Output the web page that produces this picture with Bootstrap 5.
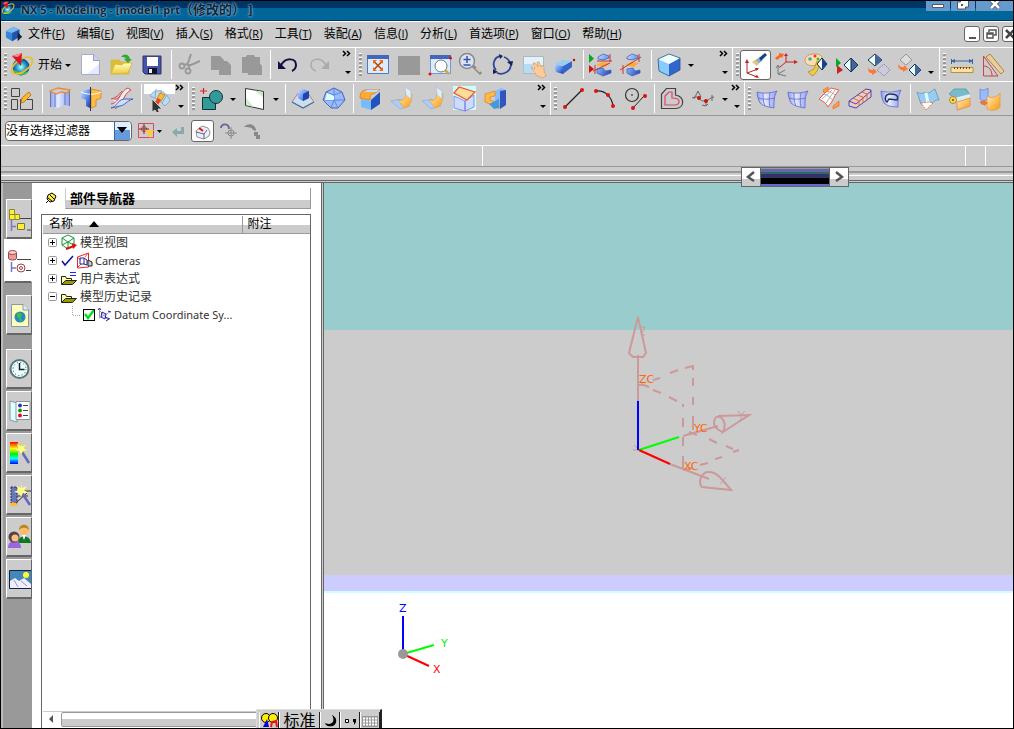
<!DOCTYPE html>
<html lang="zh-CN">
<head>
<meta charset="utf-8">
<meta name="viewport" content="width=device-width, initial-scale=1">
<title>NX 5 - Modeling</title>
<link href="https://cdn.jsdelivr.net/npm/bootstrap@5.3.0/dist/css/bootstrap.min.css" rel="stylesheet">
<style>
html,body{height:100%}
body{font-family:"Open Sans","Noto Sans CJK SC",sans-serif;font-size:12px;line-height:16px;color:#000;background:#ccc}
button{font:inherit;color:inherit;background:none;border:0;padding:0}
svg{display:block;flex:none}
.app{height:100vh;border:1px solid #000;overflow:hidden}
.titlebar{height:20px;background:linear-gradient(#036 7px,#069 7px,#069 19px,#036 19px);color:#123;font-weight:700;text-shadow:0 0 1px #8bd,0 0 2px #6ac,0 0 3px #6ac}
.titlebar .caption{white-space:pre;line-height:16px;font-size:11px}
.titlebar .caption span{font-size:13px}
.winbtns{height:10px;gap:1px}
.winbtns button{background:#69c;width:24px;height:10px;overflow:hidden}
.winbtns button:last-child{width:37px;padding-left:12px}
.winbtns svg{margin:0 auto}
.menubar{height:26px;border-top:1px solid #fff;padding:0 0 2px 4px;white-space:nowrap}
.menubar a{color:#000;text-decoration:none;display:block}
.menubar u{font-size:11px}
.menubar ul{gap:12px;margin-left:5px}
.mdi{gap:3px;margin-right:-5px}
.mdi button{width:16px;height:16px;border:1px solid #666;border-radius:3px;background:#fff}
.toolrow{height:34px;border-top:1px solid #fff;overflow:hidden}
.tgroup{border-left:1px solid #fff;height:33px}
.tgroup:first-child{border-left:0}
.grip{width:7px;height:24px;background:linear-gradient(#fff 1px,#999 1px 3px,transparent 3px) 3px 0/3px 4px repeat-y}
.tool{width:31px;height:30px;padding:2px}
.tool.start{width:67px;display:flex;align-items:center;gap:1px;white-space:nowrap}
.tool.on{background:#fff;border:1px solid #666;border-radius:3px;padding:1px}
.tool.small-on{width:23px;height:22px}
.tool.hot{background:linear-gradient(#fff 10px,transparent 10px)}
.vsep{width:1px;height:29px;background:#fff;margin:0 2px 0 3px}
.drop{width:12px;height:30px}
.over{width:13px;height:33px}
.gap-a{margin-left:7px}.gap-b{margin-left:22px}.gap-c{margin-left:26px}
.selbar{height:30px;border-top:1px solid #999;gap:2px;padding-left:4px}
.filter{position:relative;width:127px}
.filter select{width:100%;height:20px;border:1px solid #666;border-radius:4px;background:#fff;appearance:none;font:inherit;padding:0 18px 0 0;line-height:18px}
.filter svg{position:absolute;right:2px;top:1px;pointer-events:none}
.statusbar{height:21px;border-top:1px solid #fff}
.statusbar div+div{border-left:1px solid #fff}
.st-main{flex:0 0 47.5%}.st-a{width:20px}.st-b{width:28px}
.divider{height:17px;position:relative;background:linear-gradient(#999 1px,#ccc 1px 5px,#999 5px 7px,#ccc 7px 9px,#fff 9px 10px,#ccc 10px 14px,#666 14px 15px,#ccc 15px 16px,#666 16px)}
.floatbar{position:absolute;left:73.1%;top:1px;width:108px;height:20px;border:1px solid #666;z-index:3;background:#fff}
.floatbar button{width:18px;height:18px;background:linear-gradient(#fff 60%,#ccc 60%)}
.floatbar .track{background:linear-gradient(#999 1px,#66a 1px 4px,#366 4px 6px,#336 6px 10px,#000 10px 16px,#66c 16px);border:1px solid #666;border-width:0 1px}
.rail{width:31px;background:#999;border-left:2px solid #bbb;padding:16px 0 0 3px}
.rail button{display:block;width:26px;height:40px;background:#ccc;border:1px solid #fff;border-right-color:#666;border-bottom:2px solid #666;margin-bottom:2px;padding-bottom:3px;overflow:hidden}
.rail .first{margin-bottom:0}
.rail .active{background:#fff;height:44px;width:28px;margin:0 0 12px -2px;border-color:#fff;border-bottom-color:#666}
.rail .apart{margin-bottom:14px}
.navpane{width:289px;background:#fff}
.panehead{height:31px;padding:4px 10px 5px 13px;gap:8px}
.panehead h1{font-size:13px;font-weight:700;line-height:20px;background:linear-gradient(#fff 12px,#ccc 12px);border:solid #999;border-width:0 1px 1px 0;border-left:1px solid #ccc;padding-left:4px;margin:0}
.treebox{margin:0 10px 0 9px;border:1px solid #666;border-bottom:0;padding:1px 0 0 1px}
.treebox table{width:100%;border-collapse:collapse;table-layout:fixed}
.treebox th{font-weight:400;height:17px;line-height:16px;padding:0 0 0 6px;background:linear-gradient(#fff 9px,#ccc 9px);border-bottom:1px solid #999}
.treebox th+th{border-left:1px solid #999;width:68px;padding-left:5px}
.treebox td{padding:0 0 0 4px;height:18px;line-height:18px;color:#333;white-space:nowrap}
.treebox td .node{gap:2px;height:18px}
.treebox .lat{font-family:"Noto Sans","Noto Sans CJK SC",sans-serif;font-size:11px}
.node input{appearance:none;width:12px;height:12px;border:1px solid #000;margin:0;background:#fff url("data:image/svg+xml,%3Csvg xmlns='http://www.w3.org/2000/svg' viewBox='0 0 10 10'%3E%3Cpath d='M1 4l3 4 6-8' fill='none' stroke='%2300e020' stroke-width='2.4'/%3E%3C/svg%3E")}
.leaf{padding-left:24px}
.hscroll{height:17px;border-top:1px solid #ccc}
.hscroll .thumb{height:15px;border:1px solid #999;border-radius:2px;background:linear-gradient(#fff 6px,#ccc 6px)}
.hscroll button{width:18px;height:15px}
.split{width:3px;background:#ccc;border:solid #666;border-width:0 1px}
.scene{position:relative;background:#fff}
.scene svg{position:absolute;left:0;top:0;width:100%;height:100%;font-family:"DejaVu Sans",sans-serif;font-size:11px}
.sky{flex:147 0 0;background:#9cc}.ground{flex:245 0 0;background:#ccc}.haze{flex:16 0 0;background:#ccf}.rim{flex:2 0 0;background:#cff}.floor{flex:135 0 0}
.ime{position:absolute;left:255px;bottom:0;height:19px;background:#ccc;border:1px solid #ddd;border-right:2px solid #222;border-bottom:0;padding:2px 0 0 2px;z-index:4}
.ime button{height:16px;border-right:1px solid #222;border-left:1px solid #fff;width:20px}
.ime .std{width:41px;font-size:16px;line-height:16px}
</style>
</head>
<body>
<svg width="0" height="0" class="position-absolute" aria-hidden="true">
<defs>
<linearGradient id="gb" x2="1" y2="1"><stop stop-color="#cdf"/><stop offset=".5" stop-color="#69e"/><stop offset="1" stop-color="#23a"/></linearGradient>
<linearGradient id="go" x2="1" y2="1"><stop stop-color="#fec"/><stop offset="1" stop-color="#f90"/></linearGradient>
<linearGradient id="gp"><stop stop-color="#8a9cf4"/><stop offset=".4" stop-color="#e6ecff"/><stop offset="1" stop-color="#8a9cf4"/></linearGradient>
<linearGradient id="gy" y2="1" x2="0"><stop stop-color="#ffc"/><stop offset="1" stop-color="#ec3"/></linearGradient>
<radialGradient id="gs"><stop stop-color="#bff"/><stop offset=".5" stop-color="#3ac"/><stop offset="1" stop-color="#048"/></radialGradient>
<linearGradient id="rain" x2="0" y2="1"><stop stop-color="#f00"/><stop offset=".3" stop-color="#ff0"/><stop offset=".55" stop-color="#0e0"/><stop offset=".75" stop-color="#0ff"/><stop offset="1" stop-color="#00f"/></linearGradient>
</defs>
<symbol id="nx" viewBox="0 0 27 26"><circle cx="11" cy="15" r="8.500" fill="url(#gs)"/><path d="M3 17a9 9 0 0 0 16 2c-6 3-11 2-16-2z" fill="#4c4"/><ellipse cx="12" cy="13.500" rx="12" ry="6" transform="rotate(-35 12 13.500)" fill="none" stroke="#eb3" stroke-width="1.800"/><path d="M2 4l10-3-1 13z" fill="#d12"/><path d="M2 4l6 1 4-4z" fill="#f88"/></symbol>
<symbol id="cube3" viewBox="0 0 20 20"><path d="M1 7l8-5 7 3v8l-8 5-7-4z" fill="#38d"/><path d="M1 7l8-5 7 3-8 4z" fill="#7be"/><path d="M8 9l8-4v8l-8 5z" fill="#25a"/><path d="M14 8l5 5-5 5z" fill="#124"/></symbol>
<symbol id="tri" viewBox="0 0 12 26"><path d="M3 12h6l-3 3z"/></symbol>
<symbol id="more" viewBox="0 0 13 33"><path d="M1 3l2.500 2.500L1 8M5 3l2.500 2.500L5 8" fill="none" stroke="#000" stroke-width="1.500"/><path d="M3 23h6l-3 3z"/></symbol>
<symbol id="new" viewBox="0 0 27 26"><path d="M4.500 2.500h12l6 6v14h-18z" fill="#fff" stroke="#aac"/><path d="M16.500 2.500v6h6" fill="#ccf" stroke="#99c"/><path d="M10 22l12-10v10z" fill="#e4ebff"/></symbol>
<symbol id="open" viewBox="0 0 27 26"><path d="M3 8h8l2 2h8v12H3z" fill="#db3" stroke="#cb5"/><path d="M3 22l4-10 7 1 2-2h8l-4 10z" fill="url(#gy)" stroke="#db4"/><path d="M13 5c3-4 8-3 9 2h2l-4 4-4-4h2c-1-2-3-2-5-2z" fill="#3a3"/></symbol>
<symbol id="save" viewBox="0 0 27 26"><path d="M4 4h18v18H6l-2-2z" fill="#45a" stroke="#336"/><path d="M8 5h11v9H8z" fill="#fff"/><path d="M9 16h9v6H9z" fill="#112"/><path d="M10 17h3v4h-3z" fill="#eee"/></symbol>
<symbol id="cut" viewBox="0 0 27 26" fill="none"><path d="M15 2l-3 9-4 3M24 9l-9 4-4 0M13 14l0 3" stroke="#999" stroke-width="2"/><circle cx="6" cy="14" r="2.500" stroke="#999" stroke-width="1.800"/><circle cx="12" cy="19" r="2.500" stroke="#999" stroke-width="1.800"/></symbol>
<symbol id="copy" viewBox="0 0 27 26" fill="#999"><path d="M4 4h9l4 4v10H4z"/><path d="M12 9h8l4 4v10H12z"/></symbol>
<symbol id="paste" viewBox="0 0 27 26" fill="#999"><path d="M4 5h4l1-2h7l1 2h5v16H4z"/><path d="M10 10h11l3 4v9H10z"/></symbol>
<symbol id="undo" viewBox="0 0 27 26"><path d="M6 13C11 5 21 6 21 13c0 3-2 5-4 6" fill="none" stroke="#114" stroke-width="2"/><path d="M3 9v8h8z" fill="#114"/></symbol>
<symbol id="redo" viewBox="0 0 27 26"><path d="M20 13C15 5 5 6 5 13c0 3 2 5 5 6" fill="none" stroke="#aaa" stroke-width="1.500"/><path d="M23 9v8h-8z" fill="#aaa"/></symbol>
<symbol id="fit" viewBox="0 0 27 26"><path d="M2.500 3.500h21v18h-21z" fill="#dcecff" stroke="#57c"/><path d="M2 3h22v4H2z" fill="#46b"/><path d="M9 9.500l8 8M17 9.500l-8 8" stroke="#b40" stroke-width="1.500"/><path d="M8 8h4l-4 4zM18 8h-4l4 4zM8 19h4l-4-4zM18 19h-4l4-4z" fill="#f60"/></symbol>
<symbol id="blank" viewBox="0 0 27 26"><path d="M2 4h22v19H2z" fill="#999"/><path d="M13 20h2v1h-2zM20 20h2v1h-2z" fill="#a94"/></symbol>
<symbol id="zoomw" viewBox="0 0 27 26"><path d="M3.500 4.500h20v17h-20z" fill="#dcecff" stroke="#79c"/><path d="M3 3h21v4H3z" fill="#46b"/><circle cx="14" cy="14" r="6" fill="#fff" stroke="#777"/><path d="M18 18l4 4" stroke="#ca4" stroke-width="2.500"/><circle cx="23.500" cy="6" r="1.500" fill="#d11"/><circle cx="3" cy="22" r="1.500" fill="#d11"/></symbol>
<symbol id="zoomp" viewBox="0 0 27 26"><circle cx="9" cy="9" r="7.500" fill="#dde2ee" stroke="#888" stroke-width="1.500"/><path d="M9 4v7M5.500 7.500h7M5.500 13h7" stroke="#35b" stroke-width="1.500"/><path d="M15 14l8 8" stroke="#888" stroke-width="3"/><path d="M18 16l4 4" stroke="#eca" stroke-width="1.500"/></symbol>
<symbol id="rot" viewBox="0 0 27 26" fill="none"><path d="M12 4C4 5 3 14 7 18M8 21c8 3 14-3 14-9M15 5c3 1 5 3 6 6" stroke="#349" stroke-width="1.800"/><path d="M4 17l0 5 5-2zM18 10l6-1-1 5zM10 2l4 2-3 3z" fill="#125"/></symbol>
<symbol id="pan" viewBox="0 0 27 26"><path d="M3.500 4.500h20v17h-20z" fill="#e4f2ff" stroke="#abb"/><path d="M3 21V12h10v9z" fill="#9ce" opacity=".6"/><path d="M11 15l4 2-2-6 2 0 3 4-1-5 2 0 2 5 1-2 2 2v4l2 5-4 2-6-3z" fill="#fc9" stroke="#c96" stroke-width=".7"/></symbol>
<symbol id="persp" viewBox="0 0 27 26"><path d="M3 12l9 2v8L5 20z" fill="url(#gb)"/><path d="M12 14l9-5v6l-9 7z" fill="#36c"/><path d="M3 12l9-4 9 1-9 5z" fill="#9ce"/><circle cx="23" cy="8" r="1.200" fill="#c00"/></symbol>
<symbol id="sec1" viewBox="0 0 27 26"><path d="M1 2l5 4.500-5 4.500z" fill="#0a2"/><path d="M1 13l5 4-5 4z" fill="#c11"/><path d="M10 5l5-3 6 2v2l-6 2-5-1zM9 17l6-1 2 3 6-1v3l-8 3-6-3z" fill="url(#gb)" stroke="#46b" stroke-width=".8"/><path d="M8 13l6-3 8 1-5 4z" fill="#fa3"/><path d="M5 19L22 11M9 9h15M22 2v8M7 13v9" stroke="#c33"/></symbol>
<symbol id="sec2" viewBox="0 0 27 26"><path d="M8 5l5-3 6 2v2l-6 2-5-1zM8 17l6-1 2 3 5-1v3l-8 3-5-3z" fill="url(#gb)" stroke="#46b" stroke-width=".8"/><path d="M6 13l6-3 8 1-5 4z" fill="#fa3"/><path d="M1 18L22 5M4 13v9M20 2v8" stroke="#c33"/></symbol>
<symbol id="box" viewBox="0 0 27 26"><path d="M2 7l11 5v12L3 19z" fill="#8cf"/><path d="M13 12l11-6v12l-11 6z" fill="#36c"/><path d="M2 7l11-5 11 4-11 6z" fill="#eff"/><path d="M2 7l11-5 11 4v12l-11 6-10-5z" fill="none" stroke="#258" stroke-width=".8"/></symbol>
<symbol id="csys" viewBox="0 0 27 26"><path d="M5 21V9M5 21l11-4M5 21l10 4" stroke="#b22"/><path d="M3 11l2-4 2 4zM13 16l4 0-3 3zM12 25l5 1-2-3z" fill="#b22"/><path d="M10 10l8-5 2 3-5 6z" fill="#ddc57a"/><path d="M14 8l3-2 3 3-3 2z" fill="#7ad"/><path d="M17 6l6-5 2 2-6 6z" fill="#148"/></symbol>
<symbol id="csys2" viewBox="0 0 27 26" fill="none"><path d="M13 10V3M13 10h10M13 10l-6 5" stroke="#c22"/><path d="M11 4l2-3 2 3zM21 8l4 2-4 2z" fill="#c22"/><path d="M5 22V14M5 22l7-4M5 22l8 2M3 16l2-3 2 3" stroke="#777"/><path d="M2 6l4-3V1l5 1-2 4-1-1-4 3z" fill="#f62"/></symbol>
<symbol id="paint" viewBox="0 0 27 26"><path d="M1 8c0-7 15-8 17-3 1 5-5 4-6 8-5 2-11 0-11-5z" fill="#fda" stroke="#c96"/><circle cx="6" cy="7" r="1.800" fill="#3ac"/><circle cx="11" cy="4" r="1.500" fill="#e33"/><circle cx="14" cy="7" r="1.500" fill="#3b3"/><path d="M4 20l6-3 3-8 3 2-3 8-4 5z" fill="#ec4" stroke="#b93"/><path d="M13 12l5-6 5 6-5 6z" fill="#fff" stroke="#124"/><path d="M18 6l5 6-5 6z" fill="#148"/></symbol>
<symbol id="show" viewBox="0 0 27 26"><path d="M1 6l5 5-5 4z" fill="#0a2"/><path d="M2 13l6 5-6 4z" fill="#c22"/><path d="M9 13l7-7 7 7-7 7z" fill="#eff" stroke="#135"/><path d="M16 6l7 7-7 7z" fill="#469" stroke="#135"/></symbol>
<symbol id="hide" viewBox="0 0 27 26"><path d="M2 8l7-6 7 6-7 6z" fill="#eff" stroke="#135"/><path d="M9 2l7 6-7 6z" fill="#469"/><path d="M11 18l7-6 6 6-6 6z" fill="#ccd" stroke="#88b" stroke-dasharray="2 1"/><path d="M2 16c2 2 3 2 5 2v-2l4 4-5 3v-2c-3 0-4-2-4-5z" fill="#f73"/></symbol>
<symbol id="hide2" viewBox="0 0 27 26"><path d="M3 8l6-6 6 6-6 5z" fill="#ddd" stroke="#999"/><path d="M12 18l6-6 6 6-6 6z" fill="#eff" stroke="#135"/><path d="M18 12l6 6-6 6z" fill="#469"/><path d="M1 12c2 3 3 3 6 3v-2l4 4-5 3v-2c-3 0-5-2-5-6z" fill="#f73"/></symbol>
<symbol id="ruler" viewBox="0 0 27 26"><path d="M3 9h20M2.500 7v5M23.500 7v5" stroke="#36a"/><path d="M2 9l4-2v4zM24 9l-4-2v4z" fill="#36a"/><path d="M2 15.500h22v5H2z" fill="#fda" stroke="#a93"/><path d="M5.500 15v2M8.500 15v2M11.500 15v2M14.500 15v2M17.500 15v2M20.500 15v2" stroke="#840"/></symbol>
<symbol id="angle" viewBox="0 0 27 26"><path d="M3.500 4v20H18L3.500 4M3 14c6 0 9 4 9 10" fill="none" stroke="#c44"/><path d="M6 5l4-3 14 17-3 3z" fill="#ec9" stroke="#a84"/></symbol>
<symbol id="sketch" viewBox="0 0 27 26" fill="none"><path d="M1.500 2.500h8v8h-8zM1.500 13.500h6v10h-6zM10.500 13.500h12v10h-12z" stroke="#444"/><path d="M11 17l1-5 7-6 2 3-7 7z" fill="#fb2" stroke="#b73"/></symbol>
<symbol id="extr" viewBox="0 0 27 26"><path d="M3 5h20v15l-7-1-5 3-8-1z" fill="url(#gp)"/><path d="M8 7v14M18 6v13" stroke="#57b"/><path d="M3.500 5v16M22.500 5v15" stroke="#67b"/><path d="M3 5l8-3 12 2-3 3-5-1-6 2z" fill="#ccc" stroke="#e83" stroke-width="1.300"/></symbol>
<symbol id="revol" viewBox="0 0 27 26"><path d="M3 5l9-2v19l-4-2v-6l-5-2z" fill="url(#gb)"/><path d="M13 3l10 2v7l-5 2v6l-5 2z" fill="#fb4" stroke="#c82" stroke-width=".8"/><path d="M3 6c6 3 14 3 20 0" fill="none" stroke="#fff"/><path d="M12.500 1v24" stroke="#235"/></symbol>
<symbol id="sweep" viewBox="0 0 27 26" fill="none"><path d="M5 13c6 2 7-9 14-11l3 2C15 7 14 18 6 23" fill="#eee" stroke="#d44"/><path d="M2 22c5 0 6-8 13-9h9c-7 2-7 6-13 7z" fill="#cdf" stroke="#46b"/><path d="M2 13c5-1 8-4 11-8M2 18c5-1 7-4 9-8" stroke="#d44"/></symbol>
<symbol id="swoop" viewBox="0 0 27 26"><path d="M4 10C9 1 20 4 24 15l-5 5C14 14 9 12 4 10z" fill="#bde" stroke="#8ac"/><path d="M10 3l-1 9M15 4l0 11M21 9l-5 8" stroke="#8ac"/><path d="M14 7l5 2-4 6-4-2z" fill="#fb3" stroke="#c82"/><path d="M9 16l3-4 3 2-3 5z" fill="#e42"/><path d="M6 13v13l3-2 3 5 2-1-2-5h4z" fill="#333" stroke="#ccc"/></symbol>
<symbol id="unite" viewBox="0 0 27 26"><path d="M4.500 11.500h13v12h-13z" fill="#399" stroke="#133"/><circle cx="18" cy="11" r="6.500" fill="#399" stroke="#133"/><path d="M2 5h7M5.500 2v6" stroke="#d22" stroke-width="1.200"/></symbol>
<symbol id="plane" viewBox="0 0 27 26"><path d="M4.500 2.500l18 3v18l-18-4z" fill="#fff" stroke="#333"/><path d="M5 12l8 9-8-2zM14 4.500l8 7V6z" fill="#cec"/></symbol>
<symbol id="pyr" viewBox="0 0 27 26"><path d="M2 16l7-10h8l7 10-11 6z" fill="#cde" stroke="#b66" stroke-width=".8"/><path d="M8 5l5-2 6 2v7l-6 3-5-3z" fill="url(#gb)"/><path d="M13 8l6-3v7l-6 3z" fill="#24a"/><path d="M2 16l11 6 11-6" fill="none" stroke="#479" stroke-width="1.200"/></symbol>
<symbol id="poly" viewBox="0 0 27 26"><path d="M13 2l8 4 3 8-7 8h-7l-8-8 3-8z" fill="#9bf" stroke="#46b"/><path d="M5 6l8 3 8-3M13 9v5l-3 8M13 14l4 8M2 14h22M13 2v7" fill="none" stroke="#57c" stroke-width=".8"/><path d="M6 7l7 3v4H4z" fill="#dff"/></symbol>
<symbol id="blend" viewBox="0 0 27 26"><path d="M3 13l10 2v9L3 21z" fill="#7bf"/><path d="M13 14l9-8v12l-9 6z" fill="#25b"/><path d="M2 12c0-6 3-8 6-8h14l-7 4c-3 0-3 3-3 6z" fill="#fa3" stroke="#d72" stroke-width=".8"/><path d="M9 4h13l-4 2H6z" fill="#bdf"/></symbol>
<symbol id="sheet" viewBox="0 0 27 26"><path d="M2 15l10-2 9 7-10 3z" fill="#acf" stroke="#8ab" stroke-width=".6"/><path d="M9 14c6 2 8-2 8-8l6 2c0 9-3 13-8 14z" fill="url(#go)" stroke="#da5" stroke-width=".8"/><path d="M16 1l6 4v8l-5-4z" fill="#def" stroke="#abc" stroke-width=".6"/></symbol>
<symbol id="draft" viewBox="0 0 27 26"><path d="M2 0h23v24H2z" fill="#cff"/><path d="M3 10l11 5v10L3 22zM14 15l9-6v12l-9 4z" fill="#cdf" stroke="#77d" stroke-width=".8"/><path d="M3 7l5-6 16 5-8 8z" fill="#fd9" stroke="#e53" stroke-width="1.200"/></symbol>
<symbol id="shell" viewBox="0 0 27 26"><path d="M13 5l6-3 5 2v15l-7 4-4-2z" fill="#8bf"/><path d="M18 5l6-1v15l-6 4z" fill="#35b"/><path d="M3 8l10-3v5l-5 1v3l9 3v5L3 16z" fill="#fb4" stroke="#d83" stroke-width=".8"/><path d="M7 18l10-5v9l-5 1z" fill="#49d"/></symbol>
<symbol id="line" viewBox="0 0 27 26"><path d="M5 21L22 4" stroke="#222" stroke-width="1.200"/><circle cx="5" cy="21" r="2" fill="#d11"/><circle cx="22" cy="4" r="2" fill="#d11"/></symbol>
<symbol id="arc" viewBox="0 0 27 26"><path d="M5 5c10-1 16 7 17 15" fill="none" stroke="#222" stroke-width="1.200"/><circle cx="5" cy="5" r="2" fill="#d11"/><circle cx="17" cy="9" r="2" fill="#d11"/><circle cx="22" cy="20" r="2" fill="#d11"/></symbol>
<symbol id="circ" viewBox="0 0 27 26"><circle cx="10" cy="9" r="6.500" fill="none" stroke="#333" stroke-width="1.200"/><path d="M11 22L22 10" stroke="#222"/><circle cx="10" cy="9" r=".8"/><circle cx="11" cy="22" r="2" fill="#d11"/><circle cx="23" cy="10" r="2" fill="#d11"/></symbol>
<symbol id="offs" viewBox="0 0 27 26" fill="none"><path d="M2.500 22.500V8l5-5.500h9V9c10 2 9 13.500 0 13.500z" stroke="#444" stroke-width="1.200"/><path d="M6 19v-9l4-4h3v6c10 0 8 7 3 7z" stroke="#d46" stroke-width="1.200"/></symbol>
<symbol id="spl" viewBox="0 0 27 26" fill="none"><path d="M2 12c9-4 6 4 13 3 4 0 5-4 9-4M8 5L4 13M8 5l3 6M12 19l4 1 2-2M16 20v-5M22 9v6" stroke="#666"/><circle cx="9" cy="12" r="2" fill="#c11"/><circle cx="16" cy="15" r="2" fill="#c11"/></symbol>
<symbol id="surf" viewBox="0 0 27 26"><path d="M3 6c7 2 14 1 20-1-3 5-3 10-3 17-6-1-11-2-14-5-2-4-3-8-3-11z" fill="url(#gp)" stroke="#66c" stroke-width=".8"/><path d="M4 12c6 2 12 1 17 0M9 7c0 5 0 9 2 13M16 7c-1 5-1 9 0 14" fill="none" stroke="#66c" stroke-width=".8"/></symbol>
<symbol id="mesh" viewBox="0 0 27 26"><path d="M3 13l8-8 4-3 8 2c-5 5-6 12-11 17-2-4-5-6-9-8z" fill="#fff" stroke="#e54"/><path d="M8 8c4 1 6 4 9 6M11 5c4 1 6 2 9 5M6 13l10-9M10 17l9-13" stroke="#baa" fill="none"/><path d="M7 4l5-3 0 4-4 2zM17 20l6-5v5l-6 3z" fill="#f94" stroke="#d62" stroke-width=".6"/></symbol>
<symbol id="bar" viewBox="0 0 27 26"><path d="M2 15L19 3l5 1v7L9 22l-7-2z" fill="#ecb" stroke="#44b"/><path d="M2 15l7 3L24 5" fill="none" stroke="#44b"/><path d="M6 12l6 3v5M10 9l6 2v6M15 6l5 2v6" fill="none" stroke="#d64"/></symbol>
<symbol id="trim" viewBox="0 0 27 26"><path d="M3 5c7 2 14 1 20-1-3 6-3 12-3 17-6 0-11-1-14-4-2-4-3-8-3-12z" fill="url(#gp)" stroke="#66c" stroke-width=".8"/><path d="M9 16c-3-2-2-8 3-8s9 1 7 6l-8-1z" fill="none" stroke="#235" stroke-width="1.300"/></symbol>
<symbol id="wave" viewBox="0 0 27 26"><path d="M2 6c4 3 6 0 9 1 4 1 6-3 9-4l4 11c-4-1-6 4-9 3-3 0-6 2-9 1z" fill="#9ce" stroke="#59b" stroke-width=".8"/><path d="M11 7l2 10" stroke="#dff" stroke-width="3"/><path d="M6 17l8-1 4 1-7 7z" fill="#fff" stroke="#e74" stroke-dasharray="2 1"/></symbol>
<symbol id="roll" viewBox="0 0 27 26"><path d="M3 8l5-5h12l4 6-14 4z" fill="#7bc" stroke="#599" stroke-width=".8"/><path d="M8 12l16-4v4l-12 4z" fill="#dee"/><path d="M11 16l13-4v8l-13 4z" fill="url(#go)" stroke="#d84" stroke-width=".8"/><circle cx="7" cy="14" r="3.500" fill="#fd4" stroke="#a84"/><circle cx="7" cy="14" r="1.200" fill="#963"/></symbol>
<symbol id="swap" viewBox="0 0 27 26"><path d="M3 3c3 2 5 1 8-1v11c-3 2-6 2-8 0z" fill="#9bf" stroke="#68c" stroke-width=".8"/><path d="M10 10c4 3 10 1 13-3v14c-3 4-9 4-13 2z" fill="url(#go)" stroke="#d95" stroke-width=".8"/><path d="M3 15h4v-1l4 3-4 3v-1c-2 0-4-1-4-4z" fill="#e73"/></symbol>
</svg>

<div class="app d-flex flex-column">
  <header class="titlebar d-flex align-items-start">
    <svg width="16" height="17" viewBox="0 0 27 30"><use href="#nx" width="27" height="26"/></svg>
    <div class="caption ms-1">NX 5 - Modeling - [model1.prt<span>（修改的） ]</span></div>
    <div class="winbtns d-flex ms-auto">
      <button aria-label="最小化"><svg width="12" height="10"><path d="M.5 3.500h11v3H.5z" fill="#fff" stroke="#556"/></svg></button>
      <button aria-label="还原"><svg width="12" height="10"><path d="M3.500-1h8v7h-3v2h-8V1h3z" fill="#fff" stroke="#556"/><path d="M4 3h2v2H4z" fill="#556"/></svg></button>
      <button aria-label="关闭"><svg width="14" height="10" class="ms-0"><path d="M3-1l8 8M11-1L3 7" stroke="#556" stroke-width="4"/><path d="M3-1l8 8M11-1L3 7" stroke="#fff" stroke-width="2.500"/></svg></button>
    </div>
  </header>

  <nav class="menubar d-flex align-items-center" aria-label="菜单">
    <svg width="18" height="18"><use href="#cube3"/></svg>
    <ul class="list-unstyled d-flex mb-0">
      <li><a href="#">文件(<u>F</u>)</a></li><li><a href="#">编辑(<u>E</u>)</a></li><li><a href="#">视图(<u>V</u>)</a></li><li><a href="#">插入(<u>S</u>)</a></li><li><a href="#">格式(<u>R</u>)</a></li><li><a href="#">工具(<u>T</u>)</a></li><li><a href="#">装配(<u>A</u>)</a></li><li><a href="#">信息(<u>I</u>)</a></li><li><a href="#">分析(<u>L</u>)</a></li><li><a href="#">首选项(<u>P</u>)</a></li><li><a href="#">窗口(<u>O</u>)</a></li><li><a href="#">帮助(<u>H</u>)</a></li>
    </ul>
    <div class="mdi d-flex ms-auto">
      <button aria-label="最小化窗口"><svg width="14" height="14"><path d="M4 11h7" stroke="#555" stroke-width="2"/></svg></button>
      <button aria-label="还原窗口"><svg width="14" height="14" fill="none"><path d="M5 5V3h7v5h-2M3 6h6v5H3zM3 7h6" stroke="#555" stroke-width="1.500"/></svg></button>
      <button aria-label="关闭窗口"><svg width="14" height="14"><path d="M3 3l8 8M11 3l-8 8" stroke="#444" stroke-width="2.500"/></svg></button>
    </div>
  </nav>

  <div class="toolrow d-flex" role="toolbar" aria-label="标准">
    <div class="tgroup d-flex align-items-center flex-shrink-0">
      <span class="grip"></span>
      <button class="tool start"><svg width="27" height="26"><use href="#nx"/></svg>开始<svg width="10" height="26" viewBox="1 0 10 26"><use href="#tri" width="12" height="26"/></svg></button>
      <button class="tool" aria-label="新建"><svg width="27" height="26"><use href="#new"/></svg></button>
      <button class="tool" aria-label="打开"><svg width="27" height="26"><use href="#open"/></svg></button>
      <button class="tool" aria-label="保存"><svg width="27" height="26"><use href="#save"/></svg></button>
      <span class="vsep"></span>
      <button class="tool" aria-label="剪切"><svg width="27" height="26"><use href="#cut"/></svg></button>
      <button class="tool" aria-label="复制"><svg width="27" height="26"><use href="#copy"/></svg></button>
      <button class="tool" aria-label="粘贴"><svg width="27" height="26"><use href="#paste"/></svg></button>
      <span class="vsep"></span>
      <button class="tool" aria-label="撤消"><svg width="27" height="26"><use href="#undo"/></svg></button>
      <button class="tool" aria-label="重做"><svg width="27" height="26"><use href="#redo"/></svg></button>
      <button class="over gap-a" aria-label="更多"><svg width="13" height="33"><use href="#more"/></svg></button>
    </div>
    <div class="tgroup d-flex align-items-center flex-shrink-0">
      <span class="grip"></span>
      <button class="tool" aria-label="适合窗口"><svg width="27" height="26"><use href="#fit"/></svg></button>
      <button class="tool" aria-label="适合选择"><svg width="27" height="26"><use href="#blank"/></svg></button>
      <button class="tool" aria-label="缩放窗口"><svg width="27" height="26"><use href="#zoomw"/></svg></button>
      <button class="tool" aria-label="缩放"><svg width="27" height="26"><use href="#zoomp"/></svg></button>
      <button class="tool" aria-label="旋转"><svg width="27" height="26"><use href="#rot"/></svg></button>
      <button class="tool" aria-label="平移"><svg width="27" height="26"><use href="#pan"/></svg></button>
      <button class="tool" aria-label="透视"><svg width="27" height="26"><use href="#persp"/></svg></button>
      <span class="vsep"></span>
      <button class="tool" aria-label="截面"><svg width="27" height="26"><use href="#sec1"/></svg></button>
      <button class="tool" aria-label="编辑截面"><svg width="27" height="26"><use href="#sec2"/></svg></button>
      <span class="vsep"></span>
      <button class="tool" aria-label="着色"><svg width="27" height="26"><use href="#box"/></svg></button>
      <button class="drop" aria-label="着色选项"><svg width="12" height="26"><use href="#tri"/></svg></button>
      <button class="over gap-b" aria-label="更多"><svg width="13" height="33"><use href="#more"/></svg></button>
    </div>
    <div class="tgroup d-flex align-items-center flex-shrink-0">
      <span class="grip"></span>
      <button class="tool on" aria-label="显示坐标系"><svg width="27" height="26"><use href="#csys"/></svg></button>
      <button class="tool" aria-label="坐标系方向"><svg width="27" height="26"><use href="#csys2"/></svg></button>
      <button class="tool" aria-label="对象显示"><svg width="27" height="26"><use href="#paint"/></svg></button>
      <button class="tool" aria-label="显示和隐藏"><svg width="27" height="26"><use href="#show"/></svg></button>
      <button class="tool" aria-label="隐藏"><svg width="27" height="26"><use href="#hide"/></svg></button>
      <button class="tool" aria-label="显示"><svg width="27" height="26"><use href="#hide2"/></svg></button>
      <button class="over" aria-label="更多"><svg width="13" height="33" viewBox="-1 0 13 33"><path d="M1 23h6l-3 3z"/></svg></button>
    </div>
    <div class="tgroup d-flex align-items-center flex-shrink-0">
      <span class="grip"></span>
      <button class="tool" aria-label="测量距离"><svg width="27" height="26"><use href="#ruler"/></svg></button>
      <button class="tool" aria-label="测量角度"><svg width="27" height="26"><use href="#angle"/></svg></button>
    </div>
  </div>

  <div class="toolrow d-flex" role="toolbar" aria-label="特征">
    <div class="tgroup d-flex align-items-center flex-shrink-0">
      <span class="grip"></span>
      <button class="tool" aria-label="草图"><svg width="27" height="26"><use href="#sketch"/></svg></button>
      <span class="vsep"></span>
      <button class="tool" aria-label="拉伸"><svg width="27" height="26"><use href="#extr"/></svg></button>
      <button class="tool" aria-label="回转"><svg width="27" height="26"><use href="#revol"/></svg></button>
      <button class="tool" aria-label="扫掠"><svg width="27" height="26"><use href="#sweep"/></svg></button>
      <span class="vsep"></span>
      <button class="tool hot" aria-label="变化的扫掠"><svg width="27" height="26"><use href="#swoop"/></svg></button>
      <button class="over" aria-label="更多"><svg width="13" height="33"><use href="#more"/></svg></button>
    </div>
    <div class="tgroup d-flex align-items-center flex-shrink-0">
      <span class="grip"></span>
      <button class="tool" aria-label="求和"><svg width="27" height="26"><use href="#unite"/></svg></button>
      <button class="drop" aria-label="布尔选项"><svg width="12" height="26"><use href="#tri"/></svg></button>
      <button class="tool" aria-label="基准平面"><svg width="27" height="26"><use href="#plane"/></svg></button>
      <button class="drop" aria-label="基准选项"><svg width="12" height="26"><use href="#tri"/></svg></button>
      <span class="vsep"></span>
      <button class="tool" aria-label="凸台"><svg width="27" height="26"><use href="#pyr"/></svg></button>
      <button class="tool" aria-label="实体"><svg width="27" height="26"><use href="#poly"/></svg></button>
      <span class="vsep"></span>
      <button class="tool" aria-label="边倒圆"><svg width="27" height="26"><use href="#blend"/></svg></button>
      <button class="tool" aria-label="面倒圆"><svg width="27" height="26"><use href="#sheet"/></svg></button>
      <button class="tool" aria-label="软倒圆"><svg width="27" height="26"><use href="#sheet"/></svg></button>
      <button class="tool" aria-label="拔模"><svg width="27" height="26"><use href="#draft"/></svg></button>
      <button class="tool" aria-label="抽壳"><svg width="27" height="26"><use href="#shell"/></svg></button>
      <button class="over gap-c" aria-label="更多"><svg width="13" height="33"><use href="#more"/></svg></button>
    </div>
    <div class="tgroup d-flex align-items-center flex-shrink-0">
      <span class="grip"></span>
      <button class="tool" aria-label="直线"><svg width="27" height="26"><use href="#line"/></svg></button>
      <button class="tool" aria-label="圆弧"><svg width="27" height="26"><use href="#arc"/></svg></button>
      <button class="tool" aria-label="直线和圆弧"><svg width="27" height="26"><use href="#circ"/></svg></button>
      <span class="vsep"></span>
      <button class="tool" aria-label="偏置曲线"><svg width="27" height="26"><use href="#offs"/></svg></button>
      <button class="tool" aria-label="样条"><svg width="27" height="26"><use href="#spl"/></svg></button>
      <button class="drop" aria-label="样条选项"><svg width="12" height="26"><use href="#tri"/></svg></button>
      <button class="over" aria-label="更多"><svg width="13" height="33"><use href="#more"/></svg></button>
    </div>
    <div class="tgroup d-flex align-items-center flex-shrink-0">
      <span class="grip"></span>
      <button class="tool" aria-label="直纹"><svg width="27" height="26"><use href="#surf"/></svg></button>
      <button class="tool" aria-label="曲线组"><svg width="27" height="26"><use href="#surf"/></svg></button>
      <button class="tool" aria-label="曲线网格"><svg width="27" height="26"><use href="#mesh"/></svg></button>
      <button class="tool" aria-label="已扫掠"><svg width="27" height="26"><use href="#bar"/></svg></button>
      <button class="tool" aria-label="修剪片体"><svg width="27" height="26"><use href="#trim"/></svg></button>
      <span class="vsep"></span>
      <button class="tool" aria-label="整体突变"><svg width="27" height="26"><use href="#wave"/></svg></button>
      <button class="tool" aria-label="片体变形"><svg width="27" height="26"><use href="#roll"/></svg></button>
      <button class="tool" aria-label="更改边"><svg width="27" height="26"><use href="#swap"/></svg></button>
    </div>
  </div>

  <div class="selbar d-flex align-items-center" role="toolbar" aria-label="选择">
    <div class="filter"><label class="visually-hidden" for="flt">选择过滤器</label>
      <select id="flt"><option>没有选择过滤器</option></select>
      <svg width="16" height="18"><path d="M0 0h16v18H0z" fill="#69d"/><path d="M0 0h16v8H0z" fill="#def"/><path d="M3 5h10l-5 6z"/><path d="M.5 0v18" stroke="#36a"/></svg></div>
    <button class="ms-1" aria-label="常规选择"><svg width="17" height="18" fill="none"><path d="M.5 1.500h15v14H.5z" stroke="#d46"/><circle cx="6" cy="7" r="2.500" stroke="#a44"/><path d="M6 2v10M1 7h10" stroke="#822"/><path d="M7 8h9l-3 4v4l-3-2v-2z" fill="#fc3"/></svg></button>
    <button aria-label="选择选项"><svg width="8" height="18"><path d="M0 8h5l-2.500 3z"/></svg></button>
    <button class="ms-1" aria-label="返回"><svg width="14" height="16"><path d="M1 9l5-4v3h4V4h3v7H6v3z" fill="#8aa"/></svg></button>
    <button class="tool on small-on ms-1" aria-label="选择实体"><svg width="19" height="18" viewBox="0 0 19 18"><path d="M3 9l6-5 6 2 2 4-1 4-5 3-7-2z" fill="#eef" stroke="#778" stroke-width=".8"/><path d="M11 17v-5l3-4M3 10l8 2" fill="none" stroke="#345" stroke-width=".8"/><path d="M6 6l4 3" stroke="#d11" stroke-width="1.800"/></svg></button>
    <button class="ms-1" aria-label="捕捉点"><svg width="17" height="18" fill="none"><path d="M1 6c0-5 8-5 8 1" stroke="#669" stroke-width="1.800"/><path d="M11 5v12M5 11h12" stroke="#888"/><circle cx="11" cy="11" r="3" stroke="#888"/></svg></button>
    <button class="ms-1" aria-label="捕捉曲线"><svg width="18" height="18" fill="#888"><path d="M1 5c4-5 12-3 12 4l-3-1C9 5 5 5 1 5zM11 10h4v4h-4zM13 13h4v4h-4z"/></svg></button>
  </div>

  <div class="statusbar d-flex"><div class="st-main"></div><div class="flex-grow-1"></div><div class="st-a"></div><div class="st-b"></div></div>
  <div class="divider">
    <div class="floatbar d-flex">
      <button aria-label="向左"><svg width="18" height="18" fill="none"><path d="M12 4L6 9l6 4" stroke="#555" stroke-width="2.500"/></svg></button>
      <div class="track flex-grow-1"></div>
      <button aria-label="向右"><svg width="18" height="18" fill="none"><path d="M6 4l6 5-6 4" stroke="#555" stroke-width="2.500"/></svg></button>
    </div>
  </div>

  <main class="d-flex flex-grow-1 position-relative">
    <div class="rail flex-shrink-0">
      <button class="first" aria-label="装配导航器"><svg width="24" height="36"><path d="M2.500 9.500h5v5h5v5h-10z" fill="#fe3" stroke="#883"/><path d="M3 14.500h5v5" fill="none" stroke="#883"/><path d="M13 18.500h11M20 30h4" stroke="#444"/><path d="M4.500 20v11M4 26.500h5" stroke="#77c" stroke-width="1.500"/><path d="M10.500 23.500h7v6h-7z" fill="#fe3" stroke="#774"/></svg></button>
      <button class="active" aria-label="部件导航器"><svg width="26" height="40"><path d="M3.500 12.500v6c1 2 7 2 8 0v-6z" fill="#e99" stroke="#944"/><ellipse cx="7.500" cy="12.500" rx="4" ry="2" fill="#fcc" stroke="#944"/><path d="M12 19.500h14M21 30.500h5" stroke="#444"/><path d="M6.500 22v10M6 28h5" stroke="#77c" stroke-width="1.500"/><circle cx="16" cy="28" r="4" fill="#fff" stroke="#944"/><circle cx="16" cy="28" r="1.500" fill="none" stroke="#944"/></svg></button>
      <button class="apart" aria-label="浏览器"><svg width="24" height="36"><path d="M4.500 8.500h12l5 5v17h-17z" fill="#ffb" stroke="#89a"/><path d="M16 8v6h6" fill="#def" stroke="#89a"/><circle cx="13" cy="21" r="5.500" fill="#28c"/><path d="M10 17c4-2 6 2 4 4s3 3 1 5c-3-1-3-5-5-5z" fill="#4b4"/></svg></button>
      <button aria-label="历史"><svg width="24" height="36"><circle cx="12.500" cy="19" r="9" fill="#eff" stroke="#577" stroke-width="2"/><circle cx="12.500" cy="19" r="6.500" fill="none" stroke="#345" stroke-dasharray="1 2.400"/><path d="M12.500 13v6.500h5" fill="none" stroke="#123" stroke-width="1.500"/></svg></button>
      <button aria-label="系统材料"><svg width="24" height="36"><path d="M3 9l7 2v19l-7-2z" fill="#dff" stroke="#899"/><path d="M9 9.500h14v18H9z" fill="#fff" stroke="#899"/><circle cx="13" cy="13.500" r="2" fill="#33b"/><circle cx="13" cy="18.500" r="2" fill="#191"/><circle cx="13" cy="23.500" r="2" fill="#d12"/><path d="M16 13.500h5M16 18.500h5M16 23.500h5" stroke="#444"/></svg></button>
      <button aria-label="加工向导"><svg width="24" height="36"><path d="M3 8h8v22H3z" fill="url(#rain)"/><path d="M15 18l7 11" stroke="#66b" stroke-width="2.500"/><path d="M14 7l1 5 5-2-3 4 4 3-5 0-2 4-2-4-5-1 4-2-1-4 4 2z" fill="#ff8" stroke="#cc5" stroke-width=".5"/></svg></button>
      <button aria-label="安装向导"><svg width="24" height="36"><path d="M4 11h6v16H4z" fill="#67b" stroke="#336" stroke-dasharray="2 1"/><path d="M10 15h14M10 20h11M10 26l10-9" stroke="#333"/><path d="M3 28l3-2 4 2 1 2H3z" fill="#fb3"/><path d="M15 17l8 12" stroke="#66b" stroke-width="2.500"/><path d="M14 7l1 5 5-2-3 4 4 3-5 0-2 4-2-4-5-1 4-2-1-4 4 2z" fill="#ff8"/></svg></button>
      <button aria-label="角色"><svg width="24" height="36"><path d="M11 25c0-9 12-9 13 0z" fill="#172"/><path d="M15 17h4l-2 5z" fill="#fff"/><circle cx="17" cy="12" r="5" fill="#fb6"/><path d="M12 12c0-7 10-7 10 0-3-3-7-3-10 0z" fill="#b82"/><path d="M1 30c0-10 13-9 13 0z" fill="#96d"/><circle cx="7" cy="19" r="5.500" fill="#544"/><circle cx="8" cy="20" r="3.500" fill="#fb8"/></svg></button>
      <button aria-label="背景"><svg width="24" height="36"><path d="M2.500 10.500h22v18h-22z" fill="#48b" stroke="#124"/><circle cx="19" cy="15" r="3" fill="#ff3"/><path d="M3 21l5-3 4 3 5-3 7 6v4H3z" fill="#eef"/><path d="M7 20l4 7M14 21l6 5" stroke="#99b"/></svg></button>
    </div>

    <section class="navpane d-flex flex-column flex-shrink-0">
      <div class="panehead d-flex align-items-center">
        <svg width="12" height="12"><path d="M1 11l3-3" stroke="#000"/><path d="M3 3l4-2 4 3-2 5-4 1-3-3z" fill="#fe4" stroke="#000"/><path d="M5 3l4 4M3 6l4 3" stroke="#000"/></svg>
        <h1 class="flex-grow-1">部件导航器</h1>
      </div>
      <div class="treebox flex-grow-1 d-flex flex-column">
        <table>
          <thead><tr><th scope="col"><span class="d-flex align-items-center gap-3">名称<svg width="10" height="6"><path d="M0 6l5-6 5 6z"/></svg></span></th><th scope="col">附注</th></tr></thead>
          <tbody>
            <tr><td colspan="2"><div class="node d-flex align-items-center"><button aria-label="展开"><svg width="11" height="11" fill="none"><rect x="1.500" y="1.500" width="8" height="8" rx="1" stroke="#999"/><path d="M3 5.500h5M5.500 3v5" stroke="#000"/></svg></button>
              <svg width="18" height="17" fill="none"><path d="M2 4l6-3 6 3v7l-6 4-6-4zM2 4l6 4 6-4M8 8v7M2 11l6-3 6 3" stroke="#193"/><path d="M6 15l8-3" stroke="#d11" stroke-width="2"/><path d="M12 9l5 2-4 4z" fill="#d11"/></svg>模型视图</div></td></tr>
            <tr><td colspan="2"><div class="node d-flex align-items-center"><button aria-label="展开"><svg width="11" height="11" fill="none"><rect x="1.500" y="1.500" width="8" height="8" rx="1" stroke="#999"/><path d="M3 5.500h5M5.500 3v5" stroke="#000"/></svg></button>
              <svg width="14" height="14" fill="none"><path d="M2 7l3 4 8-9" stroke="#119" stroke-width="1.500"/></svg><svg width="17" height="17" fill="none"><path d="M1.500 5l11-4v14l-11 1z" stroke="#e22"/><path d="M1 5l4 3M1 16l4-4M12 1l-3 4" stroke="#e22" stroke-width=".8"/><path d="M4 6h4v6H4zM8 6l3 2v5l-3-1" stroke="#229"/><path d="M12 8l4 2v4h-4z" fill="#ccc" stroke="#222"/></svg><span class="lat">Cameras</span></div></td></tr>
            <tr><td colspan="2"><div class="node d-flex align-items-center"><button aria-label="展开"><svg width="11" height="11" fill="none"><rect x="1.500" y="1.500" width="8" height="8" rx="1" stroke="#999"/><path d="M3 5.500h5M5.500 3v5" stroke="#000"/></svg></button>
              <svg width="18" height="16"><path d="M1.500 13V5.500h4l1 2h5V13z" fill="#ffa" stroke="#222"/><path d="M1.500 13.500l4-4h11l-4 4z" fill="#990" stroke="#222"/><path d="M10 1.500h6M10 4.500h6" stroke="#22f"/></svg>用户表达式</div></td></tr>
            <tr><td colspan="2"><div class="node d-flex align-items-center"><button aria-label="折叠"><svg width="11" height="11" fill="none"><rect x="1.500" y="1.500" width="8" height="8" rx="1" stroke="#999"/><path d="M3 5.500h5" stroke="#000"/></svg></button>
              <svg width="18" height="16"><path d="M1.500 13V5.500h4l1 2h5V13z" fill="#ffa" stroke="#222"/><path d="M1.500 13.500l4-4h11l-4 4z" fill="#990" stroke="#222"/></svg>模型历史记录</div></td></tr>
            <tr><td colspan="2"><div class="node leaf d-flex align-items-center"><svg width="10" height="18" fill="none"><path d="M1.500 0v9.500H10" stroke="#aaa" stroke-dasharray="1 1"/></svg><input type="checkbox" id="dcs" checked><svg width="15" height="15" fill="none"><path d="M2.500 2v9M2 11l11-6M3 4l8 9" stroke="#99c"/><path d="M1 3l1.500-2L4 3M5 5l4 2-1 5-4-2zM8 10l5 2M11 4l3 1M9 14l3-2" stroke="#229"/></svg><label for="dcs" class="lat">Datum Coordinate Sy...</label></div></td></tr>
          </tbody>
        </table>
        <div class="hscroll d-flex mt-auto"><button aria-label="向左滚动"><svg width="18" height="15"><path d="M10 3v8L6 7z" fill="#555"/></svg></button><div class="thumb flex-grow-1"></div></div>
      </div>
    </section>
    <div class="split flex-shrink-0"></div>

    <section class="scene flex-grow-1 d-flex flex-column">
      <div class="sky"></div><div class="ground"></div><div class="haze"></div><div class="rim"></div><div class="floor"></div>
      <svg fill="none" aria-label="坐标系">
        <g stroke="#c99" stroke-width="2">
          <path d="M314 218V172M309 174l-4-4 9-36 8 36-3 4z"/>
          <path d="M314 202l6 0M329 197l7-2M346 190l8-3M361 185l8-2v4M369 195v8M369 214v8M369 233v14M317 201l8 3M329 207l8 3M345 214l8 4M359 221v3M359 235v9M359 254v9M359 273v14M365 249l8 3M385 256l8 4M402 263l7 3M409 269l6-2M391 276l7-2M376 282l8-2M360 287l8-2"/>
          <path d="M359 253l35-10M392 234c-4 6-2 12 7 15M392 234c7-2 11 7 7 15l26-17-31 1M346 281l39 15M377 303c-3-6 2-15 8-14 8 0 13 7 22 18l-29-3z"/>
          <path d="M317 144h4l-4 8h4M414 228l3 4 4-4M417 232v5M396 294l6 7M402 294l-6 7M310 262l8 8M309 267h9" stroke-width="1"/>
        </g>
        <g stroke-width="2"><path d="M314 267v-49" stroke="#00f"/><path d="M315 267l40-13" stroke="#0f0"/><path d="M315 267l31 14" stroke="red"/></g>
        <g fill="#f60"><text x="315" y="200">ZC</text><text x="370" y="249">YC</text><text x="360" y="287">XC</text></g>
        <g stroke-width="2"><path d="M79 471v-38" stroke="#00f"/><path d="M79 471l31-9" stroke="#0f0"/><path d="M79 471l26 12" stroke="red"/></g>
        <circle cx="79" cy="471" r="5" fill="#999"/>
        <text x="75" y="429" fill="#00f">Z</text><text x="117" y="464" fill="#0e0">Y</text><text x="109" y="490" fill="red">X</text>
      </svg>
    </section>

    <div class="ime d-flex">
      <button aria-label="输入法"><svg width="19" height="16"><circle cx="6" cy="6" r="4.500" fill="#fe0" stroke="#000"/><circle cx="13" cy="6" r="4.500" fill="#fe0" stroke="#000"/><path d="M3 15l4-8 2 8z" fill="#00d"/><path d="M11 15l1-5 4-1 1 6" stroke="#e11" stroke-width="2" fill="none"/></svg></button>
      <button class="std">标准</button>
      <button aria-label="半角"><svg width="18" height="16"><path d="M11 3c4 7-1 11-7 8 1 5 13 5 11-4-1-2-2-3-4-4z"/></svg></button>
      <button aria-label="标点"><svg width="18" height="16"><path d="M4.500 7.500h3v3h-3z" fill="#fff" stroke="#000"/><path d="M12 7h3v3l-2 3v-3h-1z"/></svg></button>
      <button aria-label="软键盘"><svg width="18" height="16"><path d="M1 4h16v11H1z" fill="#999"/><path d="M2 6.500h14M2 9.500h14M2 12.500h14" stroke="#fff" stroke-dasharray="2 1" stroke-width="2"/></svg></button>
    </div>
  </main>
</div>
<script src="https://cdn.jsdelivr.net/npm/bootstrap@5.3.0/dist/js/bootstrap.bundle.min.js"></script>
</body>
</html>
